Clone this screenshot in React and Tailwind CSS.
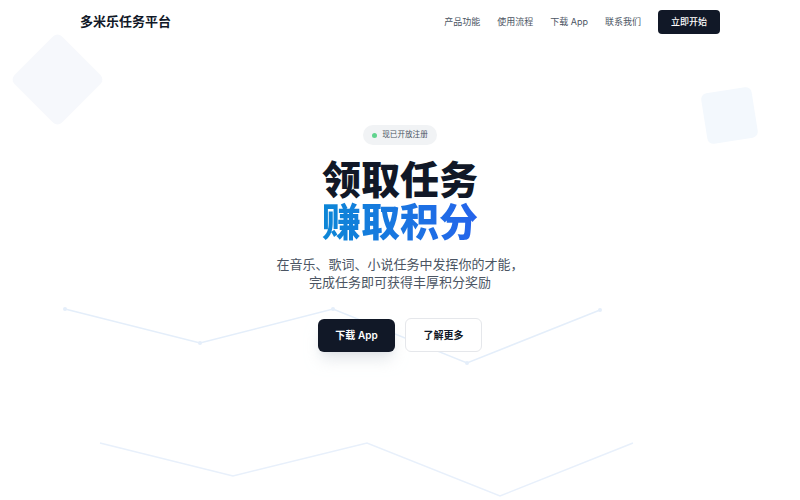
const navLinks = ['产品功能', '使用流程', '下载 App', '联系我们']

// 背景里的折线（上面一条带节点）
const upperLine = [[65, 309], [200, 343], [333, 309], [467, 363], [600, 310]]
const lowerLine = [[100, 443], [233, 476], [367, 443], [500, 496], [633, 443]]

function Backdrop() {
    const toPoints = (pts) => pts.map(p => p.join(',')).join(' ')
    return (
        <div className="absolute inset-0 pointer-events-none overflow-hidden">
            <div className="absolute left-[24px] top-[46px] w-[67px] h-[67px] rotate-45 rounded-md bg-[#f6f8fc]" />
            <div className="absolute left-[704px] top-[90px] w-[51px] h-[51px] -rotate-[9deg] rounded-md bg-[#f3f8fd]" />
            <svg className="absolute inset-0" width="800" height="500" viewBox="0 0 800 500">
                <polyline points={toPoints(upperLine)} fill="none" stroke="#e4eefa" strokeWidth="1.5" />
                {upperLine.map(([x, y]) => (
                    <circle key={x} cx={x} cy={y} r="2" fill="#e4eefa" />
                ))}
                <polyline points={toPoints(lowerLine)} fill="none" stroke="#e8f0fb" strokeWidth="1.5" />
            </svg>
        </div>
    )
}

export default function App() {
    return (
        <div
            className="relative w-full h-[500px] overflow-hidden bg-white"
            style={{ fontFamily: 'Inter, "Noto Sans CJK SC", sans-serif' }}
        >
            <Backdrop />

            {/* 顶部导航 */}
            <header className="relative w-[640px] mx-auto h-[44px] flex items-center justify-between">
                <span className="text-[13px] font-bold text-[#111827]">多米乐任务平台</span>
                <nav className="flex items-center gap-[17px]">
                    {navLinks.map(link => (
                        <a key={link} className="text-[9px] text-[#4b5563]">{link}</a>
                    ))}
                    <button className="w-[62px] h-[24px] rounded-[4px] bg-[#111827] text-white text-[9px] font-medium">
                        立即开始
                    </button>
                </nav>
            </header>

            {/* Hero */}
            <section className="relative flex flex-col items-center pt-[81px] text-center">
                <div className="h-[20px] px-[9px] flex items-center gap-[5px] rounded-full bg-[#f1f3f5]">
                    <span className="w-[5px] h-[5px] rounded-full bg-[#5fd38d]" />
                    <span className="text-[7.6px] text-[#4b5563]">现已开放注册</span>
                </div>

                <h1 className="mt-[14px] text-[39px] leading-[42px] font-black tracking-normal">
                    <span className="block text-[#111827]">领取任务</span>
                    <span className="block bg-gradient-to-r from-[#0c86d6] to-[#2563eb] bg-clip-text text-transparent">
                        赚取积分
                    </span>
                </h1>

                <p className="mt-[12px] text-[13px] leading-[18px] text-[#4b5563]">
                    在音乐、歌词、小说任务中发挥你的才能，
                    <br />
                    完成任务即可获得丰厚积分奖励
                </p>

                <div className="mt-[27px] flex items-center gap-[10px]">
                    <button className="w-[77px] h-[33px] rounded-[6px] bg-[#111827] text-white text-[10px] font-semibold shadow-lg shadow-gray-300/60">
                        下载 App
                    </button>
                    <button className="w-[77px] h-[34px] rounded-[6px] bg-white border border-[#e5e7eb] text-[#111827] text-[10px] font-semibold">
                        了解更多
                    </button>
                </div>
            </section>
        </div>
    )
}
